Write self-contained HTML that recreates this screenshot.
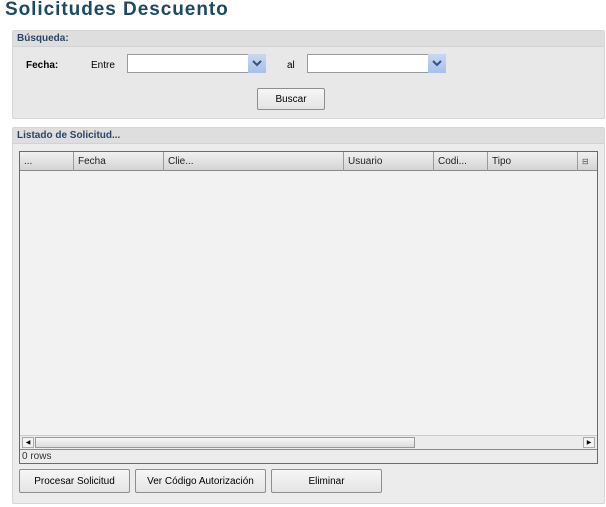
<!DOCTYPE html>
<html><head><style>
*{box-sizing:border-box}
body{margin:0;width:606px;height:507px;background:#fff;font-family:"Liberation Sans",sans-serif;font-size:11px;color:#000;position:relative;overflow:hidden}
.a{position:absolute}
h1{position:absolute;left:5px;top:-1px;margin:0;font-size:19px;font-weight:bold;color:#1d4a61;letter-spacing:0.95px}
.panel{background:#e8e8e8;border:1px solid #d6d6d6;border-radius:2px}
.ph{background:#dedede;font-weight:bold;color:#2c4566;font-size:10px;padding:2px 0 0 4px;height:16px;border-bottom:1px solid #d2d2d2}
.inp{background:#fff;border:1px solid #9a9a9a;height:19px}
.dd{background:linear-gradient(#c8d8f0,#a8c0e8);height:19px;width:18px}
.btn{background:linear-gradient(#f6f6f6,#e4e4e4);border:1px solid #8e8e8e;border-radius:2px;text-align:center;font-size:10px;line-height:21px}
.hc{position:absolute;top:0;height:19px;border-right:1px solid #9a9a9a;font-size:10px;line-height:19px;padding-left:4px;color:#222}
</style></head><body>
<h1>Solicitudes Descuento</h1>
<div class="a panel" style="left:12px;top:30px;width:593px;height:89px"><div class="ph">Búsqueda:</div></div>
<div class="a" style="left:26px;top:60px;font-weight:bold;font-size:10px">Fecha:</div>
<div class="a" style="left:91px;top:60px;font-size:10px">Entre</div>
<div class="a inp" style="left:127px;top:54px;width:122px"></div>
<div class="a dd" style="left:248px;top:54px"><svg width="18" height="19"><path d="M5 7l4 4 4-4" stroke="#33508a" stroke-width="2" fill="none"/></svg></div>
<div class="a" style="left:287px;top:60px;font-size:10px">al</div>
<div class="a inp" style="left:307px;top:54px;width:122px"></div>
<div class="a dd" style="left:428px;top:54px"><svg width="18" height="19"><path d="M5 7l4 4 4-4" stroke="#33508a" stroke-width="2" fill="none"/></svg></div>
<div class="a btn" style="left:257px;top:88px;width:68px;height:22px">Buscar</div>

<div class="a panel" style="left:12px;top:127px;width:593px;height:377px;background:#ececec"><div class="ph">Listado de Solicitud...</div></div>
<div class="a" style="left:19px;top:151px;width:579px;height:313px;border:1px solid #6a6a6a;background:#f2f2f2">
<div class="a" style="left:0;top:0;width:577px;height:19px;background:linear-gradient(#f0f0f0,#d4d4d4);border-bottom:1px solid #8a8a8a">
<div class="hc" style="left:0;width:54px">...</div>
<div class="hc" style="left:54px;width:90px">Fecha</div>
<div class="hc" style="left:144px;width:180px">Clie...</div>
<div class="hc" style="left:324px;width:90px">Usuario</div>
<div class="hc" style="left:414px;width:54px">Codi...</div>
<div class="hc" style="left:468px;width:90px">Tipo</div>
<div class="hc" style="left:558px;width:19px;border:none;font-size:8px;color:#555">⊟</div>
</div>
<div class="a" style="left:0;top:283px;width:577px;height:14px;background:#ececec;border-top:1px solid #ccc">
<div class="a" style="left:2px;top:1px;width:12px;height:11px;border:1px solid #aaa;background:#f4f4f4;font-size:6px;line-height:10px;text-align:center">◀</div>
<div class="a" style="left:15px;top:1px;width:380px;height:11px;border:1px solid #999;background:linear-gradient(#f6f6f6,#dcdcdc)"></div>
<div class="a" style="left:563px;top:1px;width:12px;height:11px;border:1px solid #aaa;background:#f4f4f4;font-size:6px;line-height:10px;text-align:center">▶</div>
</div>
<div class="a" style="left:0;top:297px;width:577px;height:14px;border-top:1px solid #8a8a8a;background:#ececec;font-size:10px;line-height:13px;padding-left:2px;color:#333">0 rows</div>
</div>
<div class="a btn" style="left:19px;top:469px;width:111px;height:24px;line-height:23px">Procesar Solicitud</div>
<div class="a btn" style="left:135px;top:469px;width:131px;height:24px;line-height:23px">Ver Código Autorización</div>
<div class="a btn" style="left:271px;top:469px;width:111px;height:24px;line-height:23px">Eliminar</div>
</body></html>
